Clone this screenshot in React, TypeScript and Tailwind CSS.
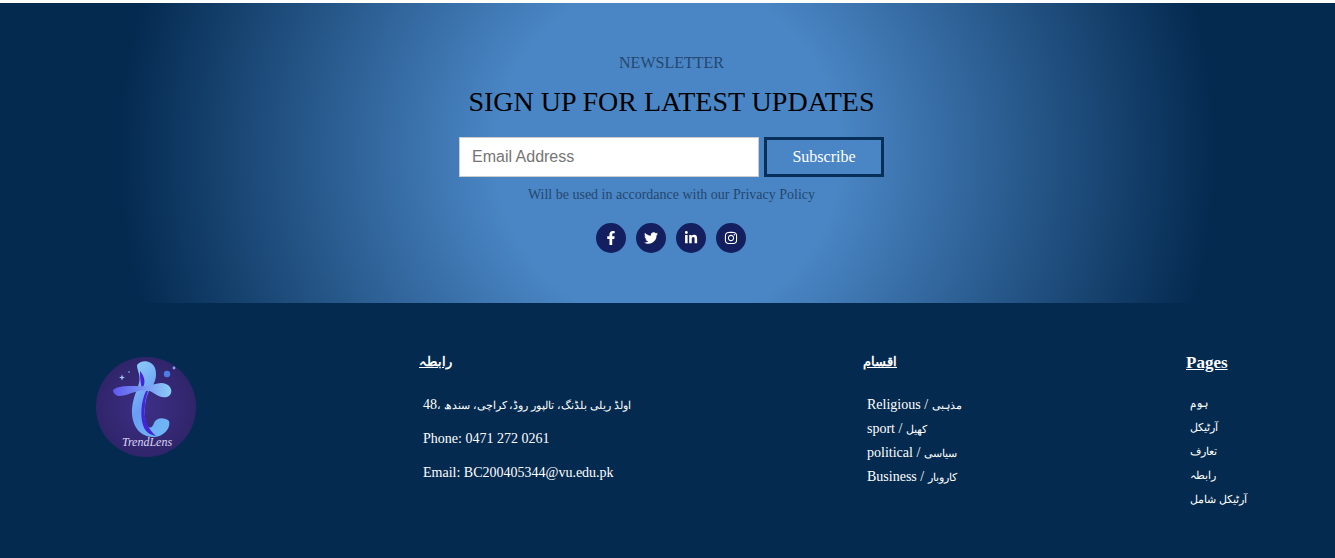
import { FaFacebookF, FaTwitter, FaLinkedinIn, FaInstagram } from 'react-icons/fa';

const socials = [FaFacebookF, FaTwitter, FaLinkedinIn, FaInstagram];
const categories = [
  { en: 'Religious', ur: 'مذہبی' },
  { en: 'sport', ur: 'کھیل' },
  { en: 'political', ur: 'سیاسی' },
  { en: 'Business', ur: 'کاروبار' },
];
const pages = ['ہوم', 'آرٹیکل', 'تعارف', 'رابطہ', 'آرٹیکل شامل'];

const Logo = () => (
  <svg width="100" height="100" viewBox="0 0 100 100" className="block">
    <defs>
      <radialGradient id="disc" cx="50%" cy="50%" r="50%">
        <stop offset="0%" stopColor="#3d2f86" />
        <stop offset="100%" stopColor="#30256b" />
      </radialGradient>
      <linearGradient id="stem" x1="0" y1="0" x2="0.5" y2="1">
        <stop offset="0%" stopColor="#8fd2f6" />
        <stop offset="60%" stopColor="#6a9cf5" />
        <stop offset="100%" stopColor="#6fb4f4" />
      </linearGradient>
      <linearGradient id="bar" x1="0" y1="0" x2="1" y2="0">
        <stop offset="0%" stopColor="#5f58f0" />
        <stop offset="100%" stopColor="#8ccdf6" />
      </linearGradient>
    </defs>
    <circle cx="50" cy="50" r="50" fill="url(#disc)" />
    <path d="M41 8 C45 2 56 3 59 11 C62 20 58 28 53 34 C48 44 48 58 50 66 C52 72 56 72 58 66 C60 60 69 60 73 64 C75 72 67 80 57 80 C42 80 35 66 36 52 C37 40 41 34 43 26 C45 18 41 14 41 8Z" fill="url(#stem)" />
    <path d="M50 34 C45 44 44 60 47 68 C49 75 54 78 60 79 C52 72 47 62 49 48 C49 42 51 38 52 34Z" fill="#4424d8" />
    <path d="M44 14 C49 20 50 26 46 32 C44 24 44 18 44 14Z" fill="#4424d8" />
    <path d="M17 33 C25 27 40 30 50 29 C58 28 64 24 70 27 C77 30 77 38 71 40 C62 42 58 34 50 33 C40 33 28 40 22 39 C19 38 17 36 17 33Z" fill="url(#bar)" />
    <circle cx="71" cy="17" r="3.2" fill="#4f7de8" />
    <circle cx="78" cy="11" r="1.4" fill="#7fa8f0" />
    <path d="M26 17.5 l.8 2.2 2.2 .8 -2.2 .8 -.8 2.2 -.8 -2.2 -2.2 -.8 2.2 -.8z" fill="#a9c4f5" />
    <circle cx="33" cy="15" r="0.8" fill="#a9c4f5" />
    <text x="51" y="89" textAnchor="middle" fontSize="12" fontStyle="italic" fontFamily="'Liberation Serif', serif" fill="#d9d6f2">TrendLens</text>
  </svg>
);

export default function App() {
  return (
    <div className="bg-[#042a50] h-[558px] overflow-hidden font-['Liberation_Serif',serif]">
      <div className="h-[3px] bg-white" />

      {/* Newsletter */}
      <section className="h-[300px] pt-[51px] pl-2 flex flex-col items-center bg-[radial-gradient(circle,#4a86c5_25%,#042a50_80%)]">
        <p className="text-base leading-[18px] text-[#24466f]">NEWSLETTER</p>
        <h2 className="mt-[14px] text-[28px] leading-[32px] text-black">SIGN UP FOR LATEST UPDATES</h2>
        <form className="mt-[19px] flex gap-[5px]">
          <input
            placeholder="Email Address"
            className="w-[300px] h-10 px-3 bg-white border border-[#ccc] font-['Liberation_Sans',sans-serif] text-base placeholder:text-[#757575]"
          />
          <button type="button" className="w-[120px] h-10 bg-[#4a86c5] border-[3px] border-[#062f5a] text-white text-base">
            Subscribe
          </button>
        </form>
        <p className="mt-[10px] text-sm leading-4 text-[#24466f]">Will be used in accordance with our Privacy Policy</p>
        <div className="mt-[20px] pr-px flex gap-[10px]">
          {socials.map((Icon, i) => (
            <a key={i} className="w-[30px] h-[30px] rounded-full bg-[#131f5e] text-white flex items-center justify-center text-sm">
              <Icon />
            </a>
          ))}
        </div>
      </section>

      {/* Footer columns */}
      <footer className="flex pt-[50px] pl-[96px] text-white text-sm">
        <div className="w-[323px] pt-1">
          <Logo />
        </div>
        <div className="w-[444px]">
          <h4 className="text-[13px] font-bold underline leading-[18px]">رابطہ</h4>
          <ul className="mt-[26px] pl-1 flex flex-col gap-[18px]">
            <li className="leading-4">
              <span className="text-[11.3px]">اولڈ ریلی بلڈنگ، تالپور روڈ، کراچی، سندھ ،</span>48
            </li>
            <li className="leading-4">Phone: 0471 272 0261</li>
            <li className="leading-4">Email: BC200405344@vu.edu.pk</li>
          </ul>
        </div>
        <div className="w-[323px]">
          <h4 className="text-[13px] font-bold underline leading-[18px]">اقسام</h4>
          <ul className="mt-[26px] pl-1 flex flex-col gap-2">
            {categories.map((c) => (
              <li key={c.en} className="leading-4">
                {c.en} / <span className="text-[11px]">{c.ur}</span>
              </li>
            ))}
          </ul>
        </div>
        <div>
          <h4 className="text-[17px] font-bold underline leading-[20px]">Pages</h4>
          <ul className="mt-[22px] pl-1 flex flex-col gap-2 text-[11px]">
            {pages.map((p) => (
              <li key={p} className="leading-4">{p}</li>
            ))}
          </ul>
        </div>
      </footer>
    </div>
  );
}
